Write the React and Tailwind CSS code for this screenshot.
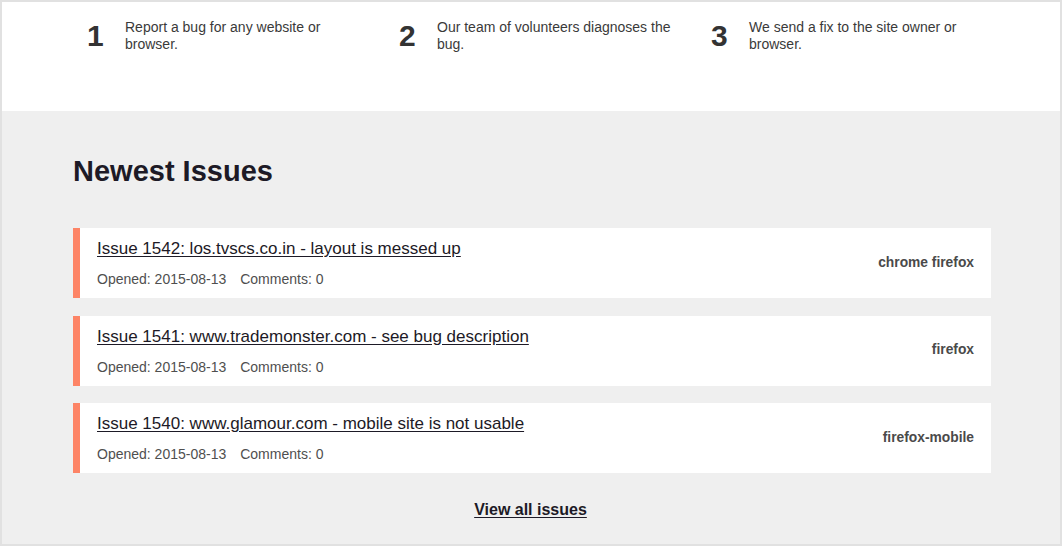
import React from "react";

const steps = [
  { n: "1", t: "Report a bug for any website or browser." },
  { n: "2", t: "Our team of volunteers diagnoses the bug." },
  { n: "3", t: "We send a fix to the site owner or browser." },
];

const issues = [
  { title: "Issue 1542: los.tvscs.co.in - layout is messed up", tags: "chrome firefox" },
  { title: "Issue 1541: www.trademonster.com - see bug description", tags: "firefox" },
  { title: "Issue 1540: www.glamour.com - mobile site is not usable", tags: "firefox-mobile" },
];

export default function App() {
  return (
    <div
      className="w-[1062px] h-[546px] border-2 border-[#e1e1e1] flex flex-col overflow-hidden"
      style={{ fontFamily: '"Liberation Sans", Arial, Helvetica, sans-serif' }}
    >
      <div className="h-[109px] bg-white flex pl-[83px] pt-[17px]">
        {steps.map((s) => (
          <div key={s.n} className="w-[312px] flex items-start">
            <div className="w-[40px] pt-[2px] text-[30px] leading-[30px] font-bold text-[#333333] pl-[2px]">
              {s.n}
            </div>
            <div className="w-[245px] text-[14px] leading-[17px] text-[#3a3a3a]">{s.t}</div>
          </div>
        ))}
      </div>
      <div className="flex-1 bg-[#efefef] pl-[71px] pr-[69px] pt-[46px]">
        <h2 className="text-[29px] leading-[29px] font-bold text-[#1d1a26]">Newest Issues</h2>
        <div className="mt-[42px] flex flex-col gap-[17.5px]">
          {issues.map((i) => (
            <div
              key={i.title}
              className="h-[70px] bg-white border-l-[7px] border-[#fd8466] flex items-center justify-between pl-[17px] pr-[17px]"
            >
              <div className="flex flex-col self-start pt-[9px]">
                <a href="#" className="text-[17px] leading-[24px] text-[#1d1a26] underline underline-offset-2">
                  {i.title}
                </a>
                <div className="mt-[8px] text-[14px] leading-[20px] text-[#4f4f4f] flex gap-[14px]">
                  <span>Opened: 2015-08-13</span>
                  <span>Comments: 0</span>
                </div>
              </div>
              <div className="text-[13.8px] font-bold text-[#4a4a4a]">{i.tags}</div>
            </div>
          ))}
        </div>
        <div className="mt-[25px] text-center pr-[3px]">
          <a href="#" className="text-[16px] leading-[20px] font-bold text-[#1d1a26] underline underline-offset-2">
            View all issues
          </a>
        </div>
      </div>
    </div>
  );
}
